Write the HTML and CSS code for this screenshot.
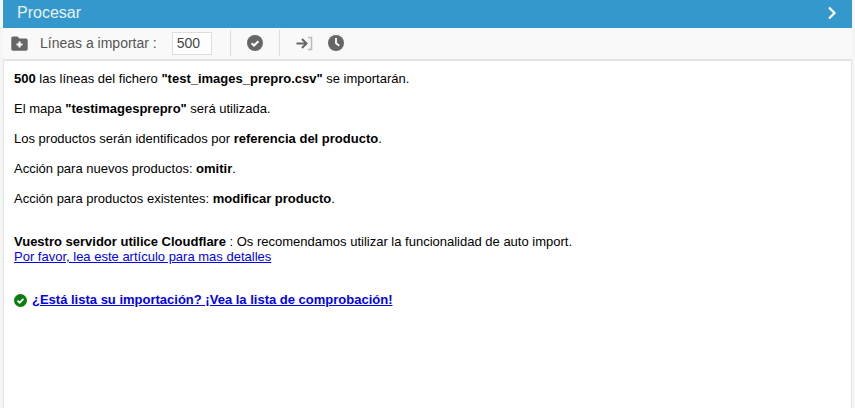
FILE: index.html
```html
<!DOCTYPE html>
<html lang="es">
<head>
    <meta charset="UTF-8">
    <title>Procesar</title>
    <link rel="stylesheet" href="styles.css">
</head>
<body>

    <div class="panel">
        <header class="panel-header">
            <h1>Procesar</h1>
            <svg class="chevron" width="10" height="14" viewBox="0 0 10 14"><path d="M2 1.5 L7.5 7 L2 12.5" fill="none" stroke="#fff" stroke-width="2.2"/></svg>
        </header>

        <div class="toolbar">
            <svg class="icon" width="17" height="15" viewBox="0 0 17 15"><path d="M2 0.5 H6.5 L8.5 2.5 H15 A1.7 1.7 0 0 1 16.7 4.2 V13 A1.7 1.7 0 0 1 15 14.7 H2 A1.7 1.7 0 0 1 0.3 13 V2.2 A1.7 1.7 0 0 1 2 0.5 Z" fill="#666"/><path d="M8.5 5.5 V11.5 M5.5 8.5 H11.5" stroke="#fff" stroke-width="2"/></svg>
            <label class="lines-label">Líneas a importar :</label>
            <input class="lines-input" type="text" value="500">
            <span class="sep"></span>
            <svg class="icon icon-check" width="16" height="16" viewBox="0 0 16 16"><circle cx="8" cy="8" r="8" fill="#666"/><path d="M4.6 8.2 L7 10.5 L11.4 6.2" fill="none" stroke="#fff" stroke-width="2"/></svg>
            <span class="sep sep-2"></span>
            <svg class="icon icon-enter" width="17" height="15" viewBox="0 0 17 15"><path d="M0.5 7.5 H9.5 M6 3 L10.5 7.5 L6 12" fill="none" stroke="#666" stroke-width="2"/><path d="M12 1.5 H15.5 V13.5 H12" fill="none" stroke="#bbb" stroke-width="1.6"/></svg>
            <svg class="icon icon-clock" width="16" height="16" viewBox="0 0 16 16"><circle cx="8" cy="8" r="8" fill="#666"/><path d="M8 3 V8.3 L11.3 10.8" fill="none" stroke="#fff" stroke-width="1.8"/></svg>
        </div>

        <div class="panel-body">
            <p><b>500</b> las líneas del fichero <b>"test_images_prepro.csv"</b> se importarán.</p>
            <p>El mapa <b>"testimagesprepro"</b> será utilizada.</p>
            <p>Los productos serán identificados por <b>referencia del producto</b>.</p>
            <p>Acción para nuevos productos: <b>omitir</b>.</p>
            <p>Acción para productos existentes: <b>modificar producto</b>.</p>

            <p class="cloudflare"><b>Vuestro servidor utilice Cloudflare</b> : Os recomendamos utilizar la funcionalidad de auto import.<br>
            <a href="#">Por favor, lea este artículo para mas detalles</a></p>

            <p class="checklist">
                <svg width="13" height="13" viewBox="0 0 13 13"><circle cx="6.5" cy="6.5" r="6.5" fill="#0a7d0a"/><path d="M3.5 6.7 L5.6 8.7 L9.5 4.8" fill="none" stroke="#fff" stroke-width="1.8"/></svg>
                <a href="#"><b>¿Está lista su importación? ¡Vea la lista de comprobación!</b></a>
            </p>
        </div>
    </div>

</body>
</html>
```

FILE: styles.css
```css
html, body {
    height: 100%;
}

body {
    font-family: 'Liberation Sans', Arial, sans-serif;
    font-size: 14px;
    background-color: #f5f5f5;
    color: #000;
    margin: 0;
    padding: 0 3px;
    overflow: hidden;
}

.panel {
    height: 100%;
    display: flex;
    flex-direction: column;
    background: #fff;
}

.panel-header {
    height: 28px;
    flex: none;
    display: flex;
    align-items: center;
    justify-content: space-between;
    background-color: #3498cd;
    padding: 0 15px 2px 14px;
    box-sizing: border-box;
}

.panel-header h1 {
    margin: 0;
    font-size: 16px;
    font-weight: normal;
    color: #e8f3fa;
}

.toolbar {
    height: 33px;
    flex: none;
    display: flex;
    align-items: center;
    background-color: #f9f9f9;
    border-bottom: 2px solid #e4e4e4;
    box-sizing: border-box;
    padding: 0 0 1px 8px;
    color: #555;
}

.lines-label {
    margin-left: 12px;
}

.lines-input {
    width: 40px;
    height: 23px;
    margin-left: 15px;
    padding: 0 4px;
    box-sizing: border-box;
    border: 1px solid #ddd;
    background: #fff;
    font-family: inherit;
    font-size: 14px;
    color: #444;
}

.sep {
    width: 1px;
    height: 26px;
    margin-left: 18px;
    background-color: #ddd;
}

.icon-check {
    margin-left: 16px;
}

.sep-2 {
    margin-left: 16px;
}

.icon-enter {
    margin-left: 16px;
}

.icon-clock {
    margin-left: 15px;
}

.panel-body {
    flex: 1;
    border-left: 1px solid #e4e4e4;
    border-right: 1px solid #e4e4e4;
    padding: 10px 10px;
    font-size: 13px;
    line-height: 16px;
}

.panel-body p {
    margin: 0 0 14px;
}

.panel-body .cloudflare {
    margin-top: 27px;
    line-height: 15px;
}

.panel-body .checklist {
    margin-top: 28px;
    display: flex;
    align-items: center;
    gap: 5px;
}

a {
    color: #0000ee;
}
```
